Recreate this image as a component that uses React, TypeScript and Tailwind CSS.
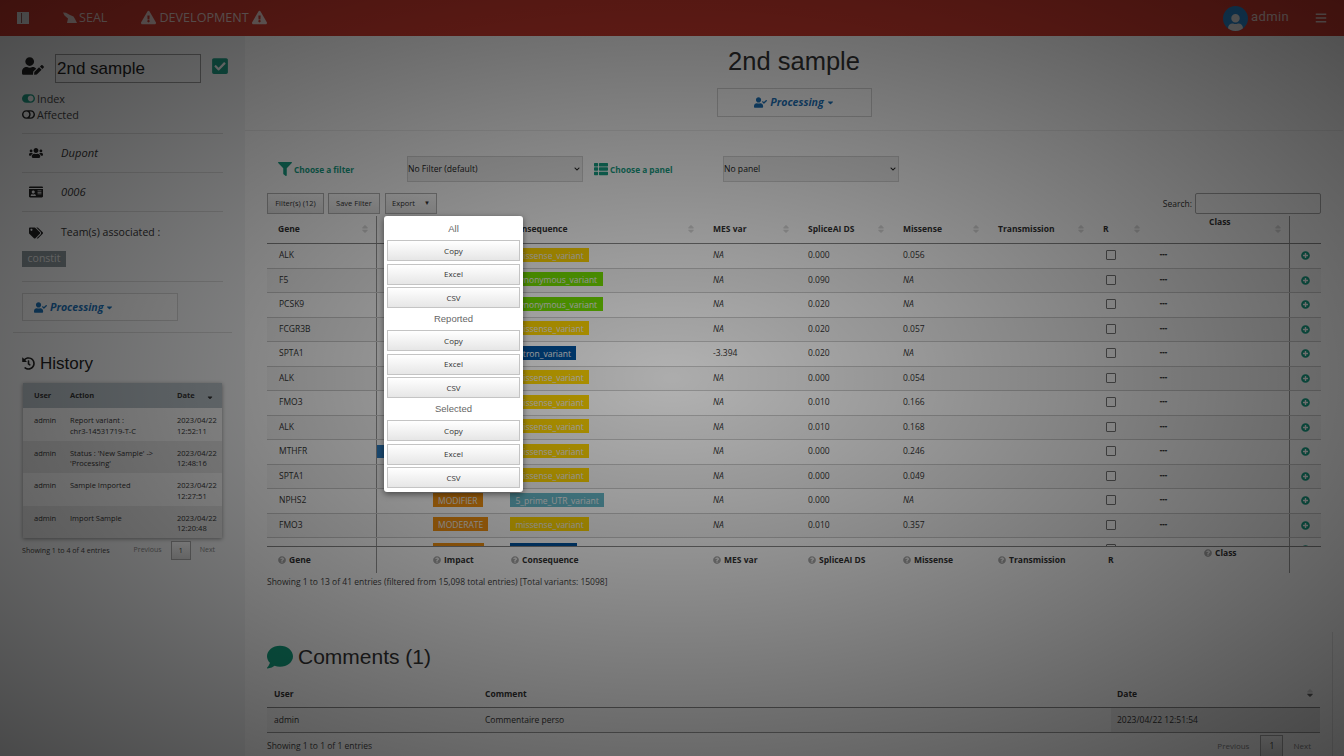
import { FaUserEdit, FaUsers, FaIdCard, FaTags, FaHistory, FaFilter, FaThList, FaComment, FaExclamationTriangle, FaToggleOn, FaToggleOff, FaCheckSquare, FaUser, FaBars, FaPlusCircle, FaUserCheck, FaQuestionCircle, FaCaretDown, FaSortDown, FaSortUp, FaChevronDown } from "react-icons/fa";

const M = "missense_variant";
const S = "synonymous_variant";
const rows: [string, string, string, string, string, string][] = [
  ["ALK", "MODERATE", M, "NA", "0.000", "0.056"],
  ["F5", "LOW", S, "NA", "0.090", "NA"],
  ["PCSK9", "LOW", S, "NA", "0.020", "NA"],
  ["FCGR3B", "MODERATE", M, "NA", "0.020", "0.057"],
  ["SPTA1", "MODIFIER", "intron_variant", "-3.394", "0.020", "NA"],
  ["ALK", "MODERATE", M, "NA", "0.000", "0.054"],
  ["FMO3", "MODERATE", M, "NA", "0.010", "0.166"],
  ["ALK", "MODERATE", M, "NA", "0.010", "0.168"],
  ["MTHFR", "MODERATE", M, "NA", "0.000", "0.246"],
  ["SPTA1", "MODERATE", M, "NA", "0.000", "0.049"],
  ["NPHS2", "MODIFIER", "5_prime_UTR_variant", "NA", "0.000", "NA"],
  ["FMO3", "MODERATE", M, "NA", "0.010", "0.357"],
  ["", "", "", "", "", ""],
];

function csqClass(c: string) {
  if (c === M) return "bg-[#ffd500]";
  if (c === S) return "bg-[#74e000]";
  if (c === "intron_variant") return "bg-[#00529e]";
  return "bg-[#66b8c8]";
}

function Sort({ active }: { active?: boolean }) {
  return (
    <span className="relative inline-block h-[12px] w-[8px] shrink-0 text-[#dadada]">
      <FaSortUp className="absolute left-0 top-0 text-[10px]" />
      <FaSortDown className={"absolute left-0 top-0 text-[10px] " + (active ? "text-[#666]" : "")} />
    </span>
  );
}

function HeadCell({ label, w, cls = "" }: { label: string; w: string; cls?: string }) {
  return (
    <div className={"flex items-center justify-between pl-[11px] pr-[8px] " + w + " " + cls}>
      <span>{label}</span>
      <Sort />
    </div>
  );
}

function FootCell({ label, w, cls = "" }: { label: string; w: string; cls?: string }) {
  return (
    <div className={"flex items-center gap-[3px] pl-[11px] " + w + " " + cls}>
      <FaQuestionCircle className="text-[8px] text-[#aaa]" />
      <span>{label}</span>
    </div>
  );
}

function PopBtn({ label }: { label: string }) {
  return (
    <div className="flex h-[21px] items-center justify-center border border-[#c4c4c4] bg-[linear-gradient(#fff,#e6e6e6)] text-[8px] text-[#333]">
      {label}
    </div>
  );
}

function PopGroup({ title }: { title: string }) {
  return (
    <div>
      <div className="flex h-[24px] items-center justify-center pt-[2px] font-['Liberation_Sans',sans-serif] text-[9.5px] text-[#666]">{title}</div>
      <div className="flex flex-col gap-[2.5px]">
        <PopBtn label="Copy" />
        <PopBtn label="Excel" />
        <PopBtn label="CSV" />
      </div>
    </div>
  );
}

function PageBtn({ cls = "" }: { cls?: string }) {
  return <div className={"flex items-center justify-center border border-[#aaa] bg-[linear-gradient(#fff,#dcdcdc)] " + cls}>1</div>;
}

function SeaIcon() {
  return (
    <svg viewBox="0 0 14 11" className="h-[11px] w-[14px]" fill="currentColor">
      <path d="M0 0.6 L3 0.8 L7 3 L10.5 4.5 L12 7 L14 11 L4 11 L5 6.5 L1.5 3.5 Z" />
    </svg>
  );
}

function SidebarIcon() {
  return (
    <svg viewBox="0 0 12 12" className="h-[12px] w-[12px]">
      <rect x="0" y="0" width="12" height="12" fill="currentColor" />
      <rect x="1" y="1" width="3" height="10" fill="currentColor" opacity="0.6" />
      <rect x="4" y="1" width="0.8" height="10" fill="#8a3a34" />
    </svg>
  );
}

function Select({ label, cls }: { label: string; cls: string }) {
  return (
    <div className={"relative h-[26px] w-[176px] " + cls}>
      <select defaultValue="a" className="block h-full w-full appearance-none border border-[#d4d4d4] bg-[#efefef] pl-0 text-[8.6px] text-[#222]">
        <option value="a">{label}</option>
      </select>
      <FaChevronDown className="pointer-events-none absolute right-[3px] top-[10px] text-[6px] text-[#222]" />
    </div>
  );
}

export default function App() {
  return (
    <div className="relative flex h-[756px] w-[1344px] flex-col overflow-hidden bg-white font-['Open_Sans',sans-serif] text-[#333]">
      <header className="flex h-[36px] shrink-0 items-center bg-[#cf3a2e] text-[#e8cfcc]">
        <div className="ml-[17px] text-[#e4e4e4]"><SidebarIcon /></div>
        <div className="ml-[34px] flex items-center gap-[2px] text-[12.6px]"><SeaIcon /><span>SEAL</span></div>
        <div className="ml-[34px] flex items-center gap-[3px] text-[12.6px]">
          <FaExclamationTriangle className="text-[15px]" />
          <span className="pt-[1px]">DEVELOPMENT</span>
          <FaExclamationTriangle className="text-[15px]" />
        </div>
        <div className="ml-auto flex items-center">
          <div className="flex h-[25px] w-[25px] items-end justify-center overflow-hidden rounded-full bg-[#2a86cc]">
            <FaUser className="text-[17px] text-[#e4e4e4]" />
          </div>
          <span className="mb-[2px] ml-[3px] font-['Roboto',sans-serif] text-[13px] tracking-[0.35px]">admin</span>
          <FaBars className="ml-[26px] mr-[17px] text-[12px]" />
        </div>
      </header>

      <div className="flex min-h-0 flex-1">
        <aside className="w-[245px] shrink-0 bg-[#f4f5f6] px-[14px]">
          <div className="flex items-center pl-[8px] pt-[18px]">
            <FaUserEdit className="mb-[5px] text-[22px] text-[#222]" />
            <div className="ml-[11px] flex h-[29px] w-[146px] items-center border border-[#999] bg-[#f4f5f6] pl-[1px] font-['Liberation_Sans',sans-serif] text-[17px] text-[#222]">2nd sample</div>
            <FaCheckSquare className="mb-[5px] ml-[10px] text-[18px] text-[#1f9d85]" />
          </div>
          <div className="mt-[8px] pl-[8px] text-[10.8px] leading-[15.5px] text-[#444]">
            <div className="flex items-center gap-[2px]"><FaToggleOn className="text-[13px] text-[#1f9d85]" />Index</div>
            <div className="flex items-center gap-[2px]"><FaToggleOff className="text-[13px] text-[#222]" />Affected</div>
          </div>
          <div className="mx-[8px] mt-[11px] border-t border-[#d8d8d8]">
            <div className="flex h-[38px] items-center italic text-[11.2px] text-[#333]"><FaUsers className="ml-[7px] w-[14px] text-[14px] text-[#222]" /><span className="ml-[18px]">Dupont</span></div>
          </div>
          <div className="mx-[8px] border-t border-[#d8d8d8]">
            <div className="flex h-[38px] items-center italic text-[11.2px] text-[#333]"><FaIdCard className="ml-[7px] w-[14px] text-[14px] text-[#222]" /><span className="ml-[18px]">0006</span></div>
          </div>
          <div className="mx-[8px] border-t border-[#d8d8d8]">
            <div className="flex h-[38px] items-center pt-[3px] text-[10.5px] tracking-[0.05px] text-[#333]"><FaTags className="ml-[7px] w-[14px] text-[14px] text-[#222]" /><span className="ml-[18px]">Team(s) associated :</span></div>
            <div className="mt-[1px] flex h-[16px] w-[44px] items-center justify-center bg-[#8b979c] text-[10.5px] text-[#e8e8e8]">constit</div>
            <div className="mt-[14px] border-t border-[#d8d8d8]" />
          </div>
          <div className="mx-[8px] mt-[11px] flex h-[28px] w-[156px] items-center border border-[#d4d4d4] bg-[#f8f8f8] pl-[11px] pt-[1px] text-[10.6px] font-bold italic text-[#1d72b8]">
            <FaUserCheck className="mr-[3px] text-[13px]" />Processing<FaCaretDown className="ml-[2px] text-[9px]" />
          </div>
          <div className="-mx-[1px] mt-[11px] border-t border-[#d8d8d8]" />
          <div className="ml-[8px] mt-[20px] flex items-center gap-[5px] font-['Liberation_Sans',sans-serif] text-[17px] leading-[21px] text-[#222]">
            <FaHistory className="text-[13px]" />History
          </div>
          <div className="ml-[9px] mt-[9px] w-[199px] text-[7.5px] text-[#333] shadow-[0_1px_4px_rgba(0,0,0,0.4)]">
            <div className="flex h-[25px] items-center bg-[#b8c2c8] font-bold">
              <span className="ml-[11px] w-[36px]">User</span>
              <span className="w-[107px]">Action</span>
              <span>Date</span>
              <FaSortDown className="ml-[11px] text-[8px]" />
            </div>
            {[
              ["Report variant :", "chr3-14531719-T-C", "12:52:11", "bg-[#f7f7f7]"],
              ["Status : 'New Sample' ->", "'Processing'", "12:48:16", "bg-[#e4e4e4]"],
              ["Sample Imported", "", "12:27:51", "bg-[#f7f7f7]"],
              ["Import Sample", "", "12:20:48", "bg-[#e4e4e4]"],
            ].map((r) => (
              <div key={r[2]} className={"flex h-[32.5px] pt-[7px] leading-[10.5px] " + r[3]}>
                <span className="ml-[11px] w-[36px]">admin</span>
                <span className="w-[107px]">{r[0]}<br />{r[1]}</span>
                <span>2023/04/22<br />{r[2]}</span>
              </div>
            ))}
          </div>
          <div className="ml-[8px] mt-[2px] flex h-[20px] items-center text-[7.1px] text-[#444]">
            <span>Showing 1 to 4 of 4 entries</span>
            <span className="ml-[24px] text-[7px] text-[#888]">Previous</span>
            <PageBtn cls="ml-[9px] h-[19px] w-[20px]" />
            <span className="ml-[9px] text-[7px] text-[#888]">Next</span>
          </div>
        </aside>

        <main className="min-w-0 flex-1 pl-[22px] pr-[23px]">
          <h1 className="pt-[9px] text-center font-['Liberation_Sans',sans-serif] text-[25.5px] leading-[33px] text-[#333]">2nd sample</h1>
          <div className="mt-[10px] flex justify-center pl-[1px]">
            <div className="flex h-[29px] w-[155px] items-center justify-center border border-[#d4d4d4] text-[10.6px] font-bold italic text-[#1d72b8]">
              <FaUserCheck className="mr-[3px] text-[13px]" />Processing<FaCaretDown className="ml-[2px] text-[9px]" />
            </div>
          </div>
          <div className="mt-[13px] -mx-[22px] border-t border-[#eeeeee]" />
          <div className="mt-[25px] flex h-[26px] items-center text-[#17a085]">
            <FaFilter className="ml-[11px] text-[14px]" />
            <span className="ml-[2px] w-[60px] whitespace-nowrap pt-[3px] text-[8.3px] font-bold">Choose a filter</span>
            <Select label="No Filter (default)" cls="ml-[53px]" />
            <FaThList className="ml-[11px] text-[14px]" />
            <span className="ml-[2px] w-[63px] whitespace-nowrap pt-[3px] text-[8.3px] font-bold">Choose a panel</span>
            <Select label="No panel" cls="ml-[50px]" />
          </div>
          <div className="mt-[11px] flex h-[21px] items-center text-[7.5px] text-[#333]">
            <div className="flex h-[21px] w-[57px] items-center justify-center border border-[#b4b4b4] bg-[linear-gradient(#fff,#e6e6e6)]">Filter(s) (12)</div>
            <div className="ml-[4px] flex h-[21px] w-[52px] items-center justify-center border border-[#b4b4b4] bg-[linear-gradient(#fff,#e6e6e6)]">Save Filter</div>
            <div className="ml-[5px] flex h-[21px] w-[52px] items-center justify-center gap-[9px] border border-[#b4b4b4] bg-[linear-gradient(#fff,#e6e6e6)]">Export<span className="text-[6px]">▼</span></div>
            <span className="ml-auto mr-[3px] pt-[1px] text-[8.5px]">Search:</span>
            <div className="h-[21px] w-[126px] rounded-[2px] border border-[#aaa] bg-white" />
          </div>

          <div className="relative mt-[2px] w-[1054px] text-[8.5px] text-[#333]">
            <div className="flex h-[28px] items-center border-b border-[#888] text-[8.5px] font-bold">
              <HeadCell label="Gene" w="w-[109px]" />
              <div className="w-[46px] self-stretch border-l border-[#999]" />
              <HeadCell label="Impact" w="w-[78px]" />
              <HeadCell label="Consequence" w="w-[202px]" cls="pl-[10px]" />
              <HeadCell label="MES var" w="w-[95px]" />
              <HeadCell label="SpliceAI DS" w="w-[95px]" />
              <HeadCell label="Missense" w="w-[95px]" />
              <HeadCell label="Transmission" w="w-[105px]" />
              <HeadCell label="R" w="w-[56px]" />
              <div className="relative flex w-[141px] items-center justify-end self-stretch pr-[8px]">
                <span className="absolute left-[61px] top-0 leading-[12px]">Class</span>
                <Sort />
              </div>
              <div className="flex-1 self-stretch border-l border-[#999]" />
            </div>
            <div className="h-[303px] overflow-hidden border-b border-[#888]">
              {rows.map((r, i) => (
                <div key={i} className={"flex h-[24.5px] items-center border-b border-[#ccc] " + (i % 2 ? "bg-[#f7f7f7]" : "bg-white")}>
                  <div className="w-[109px] pl-[12px]">{r[0]}</div>
                  <div className="flex w-[46px] items-center self-stretch border-l border-[#999]">
                    {r[0] === "MTHFR" && <span className="h-[13px] w-[7px] bg-[#2f7fc4]" />}
                  </div>
                  <div className="w-[78px] pl-[11px]">
                    {r[1] ? (
                      <span className={"px-[5px] py-[1.5px] text-[#eee] " + (r[1] === "LOW" ? "bg-[#74e000]" : "bg-[#f09010]")}>{r[1]}</span>
                    ) : (
                      <span className="block h-[14px] w-[51px] bg-[#f09010]" />
                    )}
                  </div>
                  <div className="w-[202px] pl-[10px]">
                    {r[2] ? (
                      <span className={"px-[5.5px] py-[1.5px] text-[#eee] " + csqClass(r[2])}>{r[2]}</span>
                    ) : (
                      <span className="block h-[14px] w-[67px] bg-[#00529e]" />
                    )}
                  </div>
                  <div className={"w-[95px] pl-[11px] " + (r[3] === "NA" ? "italic" : "")}>{r[3]}</div>
                  <div className="w-[95px] pl-[11px]">{r[4]}</div>
                  <div className={"w-[95px] pl-[11px] " + (r[5] === "NA" ? "italic" : "")}>{r[5]}</div>
                  <div className="w-[105px]" />
                  <div className="w-[56px] pl-[14px]"><div className="mb-[1px] h-[10px] w-[10px] rounded-[1px] border border-[#777] bg-white" /></div>
                  <div className="w-[141px] pl-[12px] text-[6px] font-extrabold tracking-[0.6px] [-webkit-text-stroke:0.3px_#333]">{r[0] ? "---" : ""}</div>
                  <div className="flex flex-1 items-center justify-center self-stretch border-l border-[#999]"><FaPlusCircle className="text-[9px] text-[#17a085]" /></div>
                </div>
              ))}
            </div>
            <div className="flex h-[26px] items-center text-[8.5px] font-bold">
              <FootCell label="Gene" w="w-[109px]" />
              <div className="w-[46px] self-stretch border-l border-[#999]" />
              <FootCell label="Impact" w="w-[78px]" />
              <FootCell label="Consequence" w="w-[202px]" cls="pl-[10px]" />
              <FootCell label="MES var" w="w-[95px]" />
              <FootCell label="SpliceAI DS" w="w-[95px]" />
              <FootCell label="Missense" w="w-[95px]" />
              <FootCell label="Transmission" w="w-[105px]" />
              <div className="w-[56px] pl-[16px]">R</div>
              <FootCell label="Class" w="w-[141px]" cls="mb-[14px] pl-[56px]" />
              <div className="flex-1 self-stretch border-l border-[#999]" />
            </div>
          </div>
          <div className="mt-[3px] text-[8.5px] leading-[12px] text-[#444]">Showing 1 to 13 of 41 entries (filtered from 15,098 total entries) [Total variants: 15098]</div>

          <div className="-mr-[12px] mt-[44px] border-r border-[#e4e4e4] pb-[40px] pr-[12px] pt-[12px]">
            <div className="flex items-center font-['Liberation_Sans',sans-serif] text-[21px] leading-[26px] text-[#333]">
              <FaComment className="mr-[5px] text-[26px] text-[#12a07f]" />Comments (1)
            </div>
            <div className="mt-[11px] text-[8.5px] text-[#333]">
              <div className="flex h-[27px] items-center border-b border-[#888] font-bold">
                <span className="w-[218px] pl-[7px]">User</span>
                <span className="w-[626px]">Comment</span>
                <span className="flex flex-1 items-center justify-between pl-[6px] pr-[7px]">Date<Sort active /></span>
              </div>
              <div className="flex h-[25px] items-center border-b border-[#999] bg-[#f7f7f7]">
                <span className="w-[218px] pl-[7px]">admin</span>
                <span className="w-[626px]">Commentaire perso</span>
                <span className="flex flex-1 items-center self-stretch bg-[#e8e8e8] pl-[6px]">2023/04/22 12:51:54</span>
              </div>
              <div className="mt-[2px] flex h-[22px] items-center text-[#444]">
                <span>Showing 1 to 1 of 1 entries</span>
                <span className="ml-auto text-[8px] text-[#888]">Previous</span>
                <PageBtn cls="ml-[11px] h-[23px] w-[23px]" />
                <span className="ml-[10px] mr-[9px] text-[8px] text-[#888]">Next</span>
              </div>
            </div>
          </div>
        </main>
      </div>

      <div className="absolute inset-0 bg-[radial-gradient(ellipse_farthest-corner_at_center,rgba(0,0,0,0.3)_0%,rgba(0,0,0,0.7)_100%)]" />

      <div className="absolute left-[384px] top-[216px] h-[276px] w-[139px] rounded-[3px] bg-white px-[3px] shadow-[0_2px_6px_rgba(0,0,0,0.5)]">
        <PopGroup title="All" />
        <div className="-mt-[2px]"><PopGroup title="Reported" /></div>
        <div className="-mt-[2px]"><PopGroup title="Selected" /></div>
      </div>
    </div>
  );
}
